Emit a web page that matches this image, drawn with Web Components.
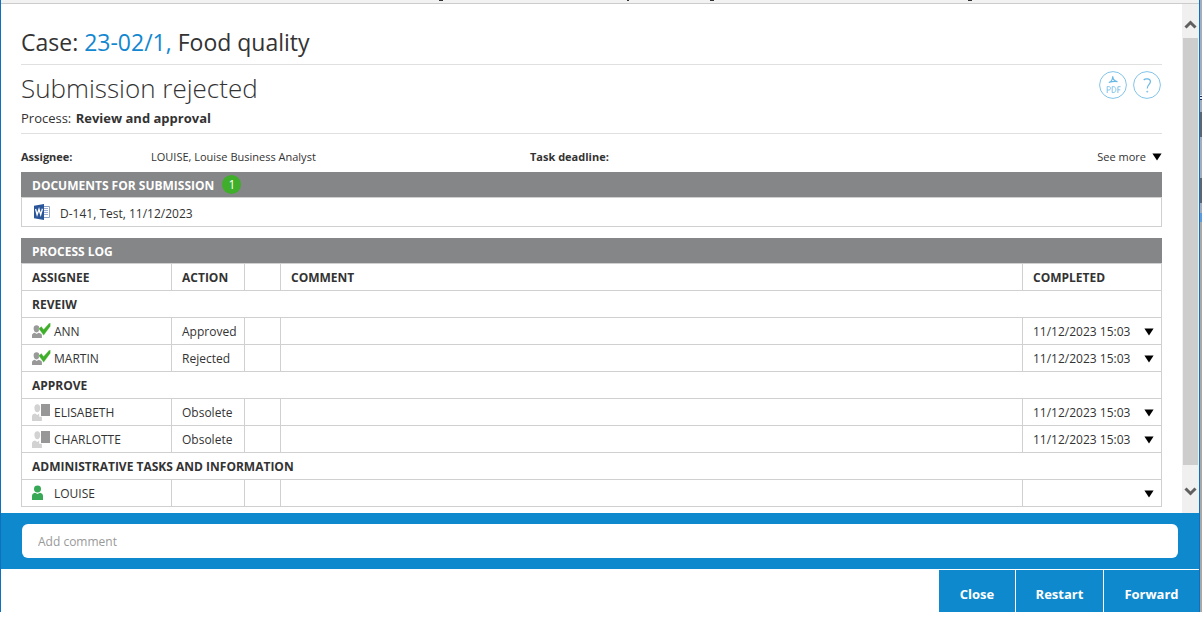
<!DOCTYPE html>
<html lang="en">
<head>
<meta charset="utf-8">
<title>Case: 23-02/1, Food quality</title>
<style>
  html, body { height: 100%; }
  body {
    margin: 0;
    background: #fff;
    color: #333;
    font: 12px/20px "Open Sans", "Noto Sans", sans-serif;
  }
</style>
</head>
<body>
<task-dialog>
  <case-title slot="content" number="23-02/1,">Food quality</case-title>
  <task-heading slot="content" process="Review and approval">Submission rejected</task-heading>
  <task-summary slot="content"></task-summary>
  <document-panel slot="content"></document-panel>
  <process-log slot="content"></process-log>
  <comment-bar slot="footer"></comment-bar>
  <action-bar slot="footer"></action-bar>
</task-dialog>

<script>
const define = (name, html, setup) => {
  const template = document.createElement('template');
  template.innerHTML = '<style>*{box-sizing:border-box}</style>' + html;
  customElements.define(name, class extends HTMLElement {
    constructor() {
      super();
      this.attachShadow({ mode: 'open' }).append(template.content.cloneNode(true));
      if (setup) setup(this, this.shadowRoot);
    }
  });
};

define('triangle-icon', `
  <style>:host{display:block;width:10px;height:8px} svg{display:block}</style>
  <svg width="10" height="8" viewBox="0 0 10 8"><path d="M.4 0.500h9.200L5 7.500z" fill="#000"/></svg>`);

define('person-icon', `
  <style>
    :host{display:block;width:20px;height:18px}
    svg{display:none}
    :host([state="done"]) .done, :host([state="obsolete"]) .obsolete, :host([state="active"]) .active{display:block}
  </style>
  <svg class="done" width="20" height="18" viewBox="0 1 20 18">
    <path d="M4.500 3.200a2.900 3.200 0 0 1 2.900 3.100c0 2.200-1 4.200-2.900 4.200S1.600 8.500 1.600 6.300a2.900 3.200 0 0 1 2.900-3.100z M0 15.900v-2.600c0-1.500 1.300-2.200 2.800-2.600l1.900 1.400 1.800-1.400c2 .5 3.400 1 3.400 2.600v2.600z" fill="#999"/>
    <path d="M6.600 6.700l2.800-2.500 2.200 3.100L17 1.300l1.500-.6v3.600L11.700 13.400z" fill="#3fae2a" stroke="#fff" stroke-width=".3"/>
  </svg>
  <svg class="obsolete" width="20" height="18" viewBox="0 1 20 18">
    <path d="M5.300 1.200c1.900 0 2.900 1.500 2.900 3.600 0 2.500-1 4.500-2.900 4.500S2.400 7.300 2.400 4.800c0-2.100 1-3.600 2.900-3.600z M0 17.900v-4.600c0-1.800 1.600-2.500 3.200-2.800l2 1.500 2-1.500v3.300h2.700v4.100z" fill="#d2d2d2"/>
    <path d="M9 1h9v12H9z" fill="#979797"/>
  </svg>
  <svg class="active" width="20" height="18" viewBox="0 1 20 18">
    <ellipse cx="5.500" cy="5" rx="3.500" ry="3.400" fill="#37a856"/>
    <path d="M0 16v-4c0-1.800 1.200-3 3-3.300l2.500 1.200L8 8.700c1.800.3 3 1.500 3 3.300v4z" fill="#37a856"/>
  </svg>`);

define('case-title', `
  <style>
    :host{display:block;border-bottom:1px solid #e0e0e0;padding:20px 0 4px}
    h1{margin:0;font-size:23px;line-height:36px;font-weight:400}
    a{color:#1387d0;text-decoration:none}
  </style>
  <h1>Case: <a href="#case"></a> <slot></slot></h1>`,
  (host, root) => { root.querySelector('a').textContent = host.getAttribute('number'); });

define('task-heading', `
  <style>
    :host{display:flex;justify-content:space-between;border-bottom:1px solid #e0e0e0;padding:6px 0 4px}
    h2{margin:0;font-size:26px;line-height:34px;font-weight:300}
    p{margin:0;padding-top:2px;font-size:13px;line-height:22px}
    b{margin-left:1px}
    .tools{display:flex;gap:6px;padding-right:1px}
    button{width:28px;height:28px;padding:0;border:0;background:none}
    svg{display:block}
  </style>
  <div><h2><slot></slot></h2><p>Process: <b></b></p></div>
  <div class="tools">
    <button type="button" aria-label="Export to PDF">
      <svg width="28" height="28" viewBox="0 0 28 28" fill="none" stroke="#69b8e4">
        <circle cx="14" cy="14" r="13.400" stroke="#83c4e9"/>
        <path d="M9.800 11.500c2-.5 4-3 3.900-6.200 .2 3 1.700 5 4.800 5.300-2.500-.5-5.500-.2-8.700.9z" stroke-width="1.200"/>
        <g stroke-width=".8"><path d="M8.200 22v-6.400h1.600c2.300 0 2.300 3.400 0 3.400H8.200M13.200 15.600V21.600h1c3.600 0 3.600-6 0-6zM18.900 22v-6.300h2.700M18.900 18.800h2.400"/></g>
      </svg>
    </button>
    <button type="button" aria-label="Help">
      <svg width="28" height="28" viewBox="0 0 28 28" fill="none" stroke="#69b8e4">
        <circle cx="14" cy="14" r="13.400" stroke="#83c4e9"/>
        <path d="M10.700 9c1.200-1.300 6.700-2 6.700 1.600 0 3-3.200 3.200-3.200 7" stroke-width="1.200"/>
        <circle cx="14.200" cy="20.700" r=".5"/>
      </svg>
    </button>
  </div>`,
  (host, root) => { root.querySelector('b').textContent = host.getAttribute('process'); });

define('task-summary', `
  <style>
    :host{display:flex;align-items:center;padding:13px 0 5px;font-size:11px}
    dl{display:grid;grid-template-columns:130px 379px auto;margin:0;flex:1}
    dt{font-weight:700} dd{margin:0}
    button{display:flex;align-items:center;gap:6px;margin:0;padding:0;border:0;background:none;color:inherit;font:inherit}
  </style>
  <dl><dt>Assignee:</dt><dd>LOUISE, Louise Business Analyst</dd><dt>Task deadline:</dt></dl>
  <button type="button">See more <triangle-icon></triangle-icon></button>`);

define('section-bar', `
  <style>
    :host{display:flex;align-items:center;gap:8px;height:25px;padding:0 11px;background:#858688;color:#fff}
    h3{margin:0;padding-top:3px;font-size:12px;line-height:22px;font-weight:700}
  </style>
  <h3><slot></slot></h3><slot name="badge"></slot>`);

define('document-panel', `
  <style>
    :host{display:block;margin-bottom:11px}
    .badge{display:block;width:19px;height:19px;border-radius:50%;background:#3fae2a;font-size:12px;line-height:19px;text-align:center}
    .row{display:flex;align-items:center;gap:10px;height:30px;padding:0 12px;border:1px solid #d0d0d0}
    a{padding-top:3px;color:inherit;text-decoration:none}
    svg{display:block}
  </style>
  <section-bar>DOCUMENTS FOR SUBMISSION<span class="badge" slot="badge">1</span></section-bar>
  <div class="row">
    <svg width="16" height="16" viewBox="0 0 16 16">
      <path d="M9 2.500h6.500v11H9" fill="#fff" stroke="#8fa4cb"/>
      <path d="M10 4.500h4M10 6.500h4M10 8.500h4M10 10.500h4" stroke="#9db0d3"/>
      <path d="M0 1.800L10 0v16L0 14.200z" fill="#2a5699"/>
      <path d="M1.600 5l1.500 5.800L5 5.200l1.700 5.600L8.400 4.800" fill="none" stroke="#fff" stroke-width="1.300"/>
    </svg>
    <a href="#document">D-141, Test, 11/12/2023</a>
  </div>`);

define('process-log', `
  <style>
    :host{display:block}
    table{width:100%;border-collapse:collapse;table-layout:fixed}
    th,td{height:27px;padding:1px 10px 0;border:1px solid #d0d0d0;text-align:left;font-weight:400;line-height:20px;white-space:nowrap}
    thead th, th[colspan]{font-weight:700}
    .who,.when{display:flex;align-items:center}
    .who{gap:2px}
    .when{justify-content:space-between}
    td:last-child{padding-right:7px}
    button{margin:0 0 0 auto;padding:0;border:0;background:none}
  </style>
  <section-bar>PROCESS LOG</section-bar>
  <table>
    <colgroup><col style="width:150px"><col style="width:73px"><col style="width:36px"><col><col style="width:139px"></colgroup>
    <thead><tr><th>ASSIGNEE</th><th>ACTION</th><th></th><th>COMMENT</th><th>COMPLETED</th></tr></thead>
    <tbody></tbody>
  </table>`,
  (host, root) => {
    const done = '11/12/2023 15:03';
    const groups = [
      ['REVEIW', [['done', 'ANN', 'Approved', done], ['done', 'MARTIN', 'Rejected', done]]],
      ['APPROVE', [['obsolete', 'ELISABETH', 'Obsolete', done], ['obsolete', 'CHARLOTTE', 'Obsolete', done]]],
      ['ADMINISTRATIVE TASKS AND INFORMATION', [['active', 'LOUISE', '', '']]]
    ];
    root.querySelector('tbody').innerHTML = groups.map(([title, rows]) =>
      `<tr><th colspan="5">${title}</th></tr>` + rows.map(([state, name, action, when]) =>
        `<tr><td><div class="who"><person-icon state="${state}"></person-icon><span>${name}</span></div></td>
         <td>${action}</td><td></td><td></td>
         <td><div class="when"><span>${when}</span><button type="button" aria-label="Details"><triangle-icon></triangle-icon></button></div></td></tr>`
      ).join('')).join('');
  });

define('scroll-rail', `
  <style>
    :host{display:flex;flex-direction:column;width:17px;background:#f0f0f0}
    button{height:34px;padding:8px 0 0;border:0;background:none}
    button:last-child{height:48px;padding-top:4px}
    .thumb{flex:1;margin:0 1px;background:#cdcdcd}
    svg{display:block;margin:0 auto}
  </style>
  <button type="button" aria-label="Scroll up"><svg width="13" height="10" viewBox="0 0 13 10"><path d="M1.500 7.500l5-5 5 5" fill="none" stroke="#606060" stroke-width="3"/></svg></button>
  <div class="thumb"></div>
  <button type="button" aria-label="Scroll down"><svg width="13" height="10" viewBox="0 0 13 10"><path d="M1.500 2.500l5 5 5-5" fill="none" stroke="#606060" stroke-width="3"/></svg></button>`);

define('comment-bar', `
  <style>
    :host{display:block;padding:11px 21px;background:#0f89ce}
    input{display:block;width:100%;height:34px;padding:1px 16px 0;border:0;border-radius:6px;background:#fff;color:#333;font:inherit}
    input::placeholder{color:#999;opacity:1}
  </style>
  <input type="text" placeholder="Add comment" aria-label="Add comment">`);

define('action-bar', `
  <style>
    :host{display:grid;grid-template-columns:76px 87px 95px;justify-content:end;gap:1px;padding-top:1px}
    button{height:42px;padding:6px 0 0;border:0;background:#0f89ce;color:#fff;font:700 13px/20px "Open Sans","Noto Sans",sans-serif}
  </style>
  <button type="button">Close</button><button type="button">Restart</button><button type="button">Forward</button>`);

define('task-dialog', `
  <style>
    :host{display:flex;height:100vh;padding-bottom:7px;box-sizing:border-box}
    .frame{display:flex;flex:1;flex-direction:column;min-width:0;border:solid #0f70c0;border-width:0 1px}
    .edge{width:2px;background:linear-gradient(#a2adbd 0 95px,#dfe6ee 95px 96px,#1b2d55 96px 97px,#dfe6ee 97px 99px,#1b2d55 99px 100px,#a2adbd 100px 112px,#5b6675 112px 137px,#a2adbd 137px 178px,#5b6675 178px 203px,#a2adbd 203px 213px,#5b9bdc 213px 222px,#a8a8a8 222px)}
    .strip{height:4px;border-bottom:1px solid #ccc;background:#f2f2f2}
    .strip svg{display:block}
    .body{display:flex;flex:1;min-height:0}
    main{flex:1;min-width:0;padding:0 20px;overflow:hidden}
  </style>
  <div class="frame">
    <div class="strip"><svg width="1000" height="3"><path d="M438 0h4v1h-4zM626 0h2v1h-2zM709 0h4v1h-4zM967 0h4v1h-4z" fill="#333"/></svg></div>
    <div class="body"><main><slot name="content"></slot></main><scroll-rail></scroll-rail></div>
    <footer><slot name="footer"></slot></footer>
  </div>
  <div class="edge"></div>`);
</script>
</body>
</html>
